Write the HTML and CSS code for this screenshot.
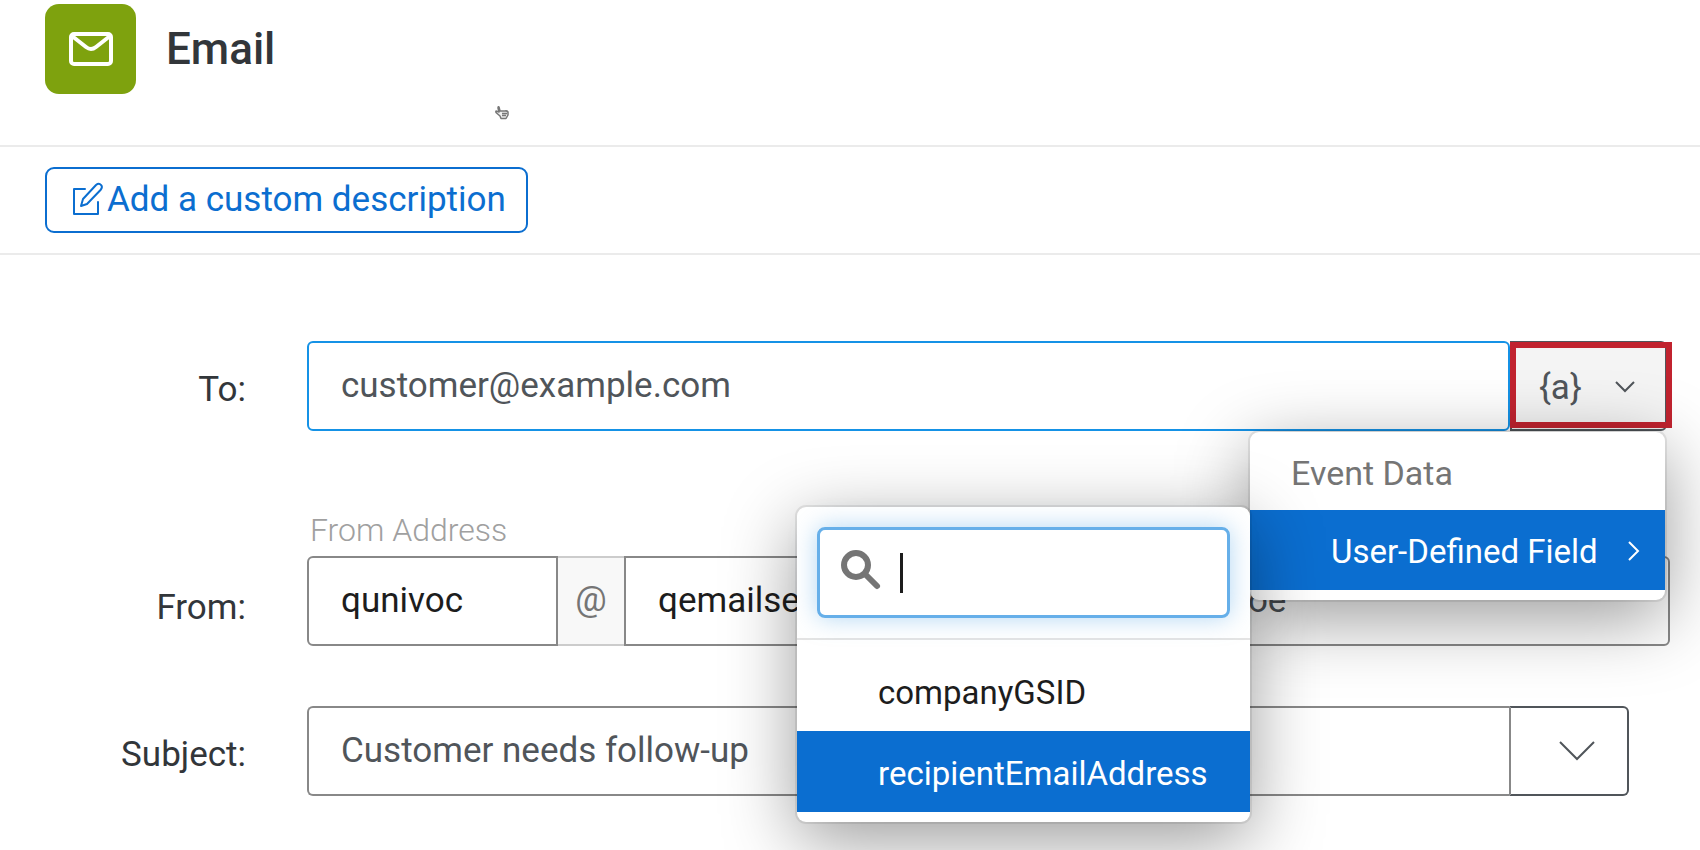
FILE: index.html
```
<!DOCTYPE html>
<html lang="en">
<head>
    <meta charset="UTF-8">
    <meta name="viewport" content="width=device-width, initial-scale=1.0">
    <title>Email task</title>
    <link rel="stylesheet" href="styles.css">
</head>
<body>
    <header class="task-header">
        <span class="task-icon">
            <svg width="46" height="36" viewBox="0 0 46 36" fill="none" stroke="#fff" stroke-width="4" stroke-linejoin="round">
                <rect x="3" y="3" width="40" height="30" rx="3"/>
                <path d="M4 5 L18 16 Q23 20 28 16 L42 5"/>
            </svg>
        </span>
        <h1 class="task-title">Email</h1>
        <svg class="pointer" width="14" height="15" viewBox="0 0 14 15" fill="#eee" stroke="#777" stroke-width="1.500" stroke-linejoin="round">
            <path d="M5 6 L4 2 Q3 1 3 3 L4 7 L1 6 Q0.500 7 1.500 8 L5 11 L6 13.500 H11 L13 10 V7 Q12 5.500 10 6 Z"/>
            <path d="M7 8.500 H12 M7 10.500 H11"/>
        </svg>
    </header>

    <section class="description-bar">
        <button type="button" class="description-btn">
            <svg width="32" height="34" viewBox="0 0 32 34" fill="none" stroke="currentColor" stroke-width="2" stroke-linejoin="round" stroke-linecap="round">
                <path d="M14 7 H3 V32 H27 V20"/>
                <path d="M10 24 L12 17 L25 3 Q28 0.500 30 3 Q32 5 29.500 8 L16 22 Z"/>
            </svg>
            <span>Add a custom description</span>
        </button>
    </section>

    <main class="form">
        <div class="row row-to">
            <label class="row-label" for="to">To:</label>
            <div class="group">
                <input class="field field-focus" id="to" type="text" value="customer@example.com">
                <button type="button" class="piped-btn" aria-label="Insert piped text">
                    <span>{a}</span>
                    <svg width="22" height="14" viewBox="0 0 22 14" fill="none" stroke="currentColor" stroke-width="2">
                        <path d="M2 2 L11 11 L20 2"/>
                    </svg>
                </button>

                <div class="menu menu-main">
                    <div class="menu-heading">Event Data</div>
                    <button type="button" class="menu-item active">
                        <span>User-Defined Field</span>
                        <svg width="14" height="22" viewBox="0 0 14 22" fill="none" stroke="currentColor" stroke-width="2">
                            <path d="M2 2 L11 11 L2 20"/>
                        </svg>
                    </button>
                    <div class="menu submenu">
                        <div class="search">
                            <div class="search-box">
                                <svg width="42" height="42" viewBox="0 0 42 42" fill="none" stroke="#757575" stroke-linecap="round">
                                    <circle cx="16" cy="16" r="12" stroke-width="6"/>
                                    <path d="M25 25 L37 37" stroke-width="6"/>
                                </svg>
                                <span class="caret"></span>
                                <input class="search-input" type="text" aria-label="Search fields">
                            </div>
                        </div>
                        <button type="button" class="submenu-item">companyGSID</button>
                        <button type="button" class="submenu-item active">recipientEmailAddress</button>
                    </div>
                </div>
            </div>
        </div>

        <div class="row row-from">
            <label class="row-label" for="from">From:</label>
            <div class="group">
                <div class="stack">
                    <label class="hint" for="from">From Address</label>
                    <div class="address">
                        <input class="field field-user" id="from" type="text" value="qunivoc">
                        <span class="at">@</span>
                        <input class="field field-domain" type="text" value="qemailserver.com" aria-label="Domain">
                    </div>
                </div>
                <input class="field field-name" type="text" value="Jane Doe" aria-label="From name">
            </div>
        </div>

        <div class="row">
            <label class="row-label" for="subject">Subject:</label>
            <div class="group">
                <input class="field field-subject" id="subject" type="text" value="Customer needs follow-up">
                <button type="button" class="subject-btn" aria-label="Subject options">
                    <svg width="38" height="22" viewBox="0 0 38 22" fill="none" stroke="currentColor" stroke-width="2">
                        <path d="M2 2 L19 19 L36 2"/>
                    </svg>
                </button>
            </div>
        </div>
    </main>
</body>
</html>
```
FILE: styles.css
```
:root {
    --blue: #0b6ed0;
    --border: #888;
    --dark: #50555a;
    --text: #32363a;
}

* { box-sizing: border-box; }

body {
    margin: 0;
    min-height: 100vh;
    font-family: Roboto, "Liberation Sans", sans-serif;
    font-size: 35px;
    color: var(--text);
    background: #fff;
}

button,
input { font: inherit; margin: 0; }
button { cursor: pointer; }
svg { flex: none; }

/* --- Header --- */
.task-header {
    display: flex;
    align-items: flex-start;
    height: 147px;
    padding: 4px 45px;
    border-bottom: 2px solid #ebebeb;
    position: relative;
}

.task-icon {
    display: flex;
    align-items: center;
    justify-content: center;
    width: 91px;
    height: 90px;
    border-radius: 14px;
    background: #7ea20e;
}

.task-title {
    margin: 0 0 0 30px;
    font-size: 44px;
    font-weight: 500;
    line-height: 90px;
}

.pointer { position: absolute; left: 495px; top: 105px; }

.description-bar {
    padding: 20px 45px;
    border-bottom: 2px solid #ebebeb;
}

.description-btn {
    display: flex;
    align-items: center;
    gap: 4px;
    height: 66px;
    padding: 0 20px 2px 24px;
    border: 2px solid var(--blue);
    border-radius: 9px;
    background: #fff;
    color: var(--blue);
}

/* --- Form --- */
.form {
    display: flex;
    flex-direction: column;
    padding: 86px 30px 0 45px;
}

.row {
    display: flex;
    align-items: center;
}

.row-label {
    width: 201px;
    margin-right: 61px;
    padding-top: 6px;
    text-align: right;
}

.group {
    display: flex;
    flex: 1;
    position: relative;
}

.field {
    height: 90px;
    min-width: 0;
    padding: 0 32px 2px;
    border: 2px solid var(--border);
    border-radius: 6px;
    background: #fff;
    color: #1d1d1d;
    outline: none;
}

.field-focus {
    flex: 1;
    border-color: #1592e6;
    color: var(--dark);
}

.piped-btn {
    position: relative;
    display: flex;
    align-items: center;
    justify-content: space-between;
    width: 157px;
    height: 90px;
    margin-right: 3px;
    padding: 2px 29px 0 27px;
    border: 2px solid var(--dark);
    border-radius: 0 6px 6px 0;
    background: #f4f4f4;
    color: var(--dark);
}

/* highlight frame over the button */
.piped-btn::after {
    content: "";
    position: absolute;
    inset: -1px -7px 1px -2px;
    border: 6px solid #c1232f;
}

.row-from { padding: 78px 0 60px; align-items: flex-end; }
.row-from .row-label { line-height: 76px; }
.row-from .group { align-items: flex-end; }

.hint {
    display: block;
    padding: 0 3px 5px;
    line-height: 42px;
    font-size: 32px;
    font-weight: 300;
    color: #a0a0a0;
}

.address { display: flex; }
.field-user { width: 251px; border-radius: 6px 0 0 6px; }

.at {
    width: 66px;
    border: solid #ccc;
    border-width: 2px 0;
    background: #f8f8f8;
    color: #757575;
    line-height: 84px;
    text-align: center;
}

.field-domain { width: 400px; border-radius: 0 6px 6px 0; }
.field-name { flex: 1; margin-left: 82px; color: var(--dark); }

.field-subject {
    flex: 1;
    border-right: 0;
    border-radius: 6px 0 0 6px;
    color: var(--dark);
}

.subject-btn {
    display: flex;
    align-items: center;
    justify-content: center;
    width: 120px;
    height: 90px;
    margin-right: 41px;
    padding: 0 0 0 16px;
    border: 2px solid var(--dark);
    border-left-color: var(--border);
    border-radius: 0 6px 6px 0;
    background: #fff;
    color: var(--dark);
}

/* --- Menus --- */
.menu {
    position: absolute;
    border-radius: 9px;
    background: #fff;
    box-shadow: 0 0 0 2px rgba(0, 0, 0, 0.08), 0 18px 72px rgba(0, 0, 0, 0.4);
}

.menu-main {
    z-index: 2;
    top: 91px;
    right: 5px;
    width: 415px;
    padding-bottom: 10px;
}

.menu-heading {
    padding: 4px 41px 0;
    line-height: 74px;
    font-size: 34px;
    color: #757575;
}

.menu-item {
    display: flex;
    align-items: center;
    justify-content: space-between;
    width: 100%;
    height: 80px;
    padding: 2px 24px 0 81px;
    border: 0;
    font-size: 33px;
}

.active { background: var(--blue); color: #fff; }

.submenu {
    top: 75px;
    right: 100%;
    width: 453px;
    padding-bottom: 10px;
}

.search {
    padding: 20px;
    border-bottom: 2px solid #e4e4e4;
}

.search-box {
    display: flex;
    align-items: center;
    height: 91px;
    padding: 0 20px 6px;
    border: 3px solid #66afe9;
    border-radius: 8px;
    box-shadow: 0 0 24px rgba(102, 175, 233, 0.5);
}

.caret { width: 3px; height: 40px; margin: 6px 0 0 18px; background: #1d1d1d; }
.search-input { flex: 1; min-width: 0; border: 0; outline: 0; background: none; }

.submenu-item {
    display: block;
    width: 100%;
    height: 81px;
    padding: 4px 81px 0;
    border: 0;
    background: #fff;
    color: #1d1d1d;
    font-size: 33px;
    text-align: left;
}

.search + .submenu-item { margin-top: 10px; }
.submenu-item.active { background: var(--blue); color: #fff; }
```
